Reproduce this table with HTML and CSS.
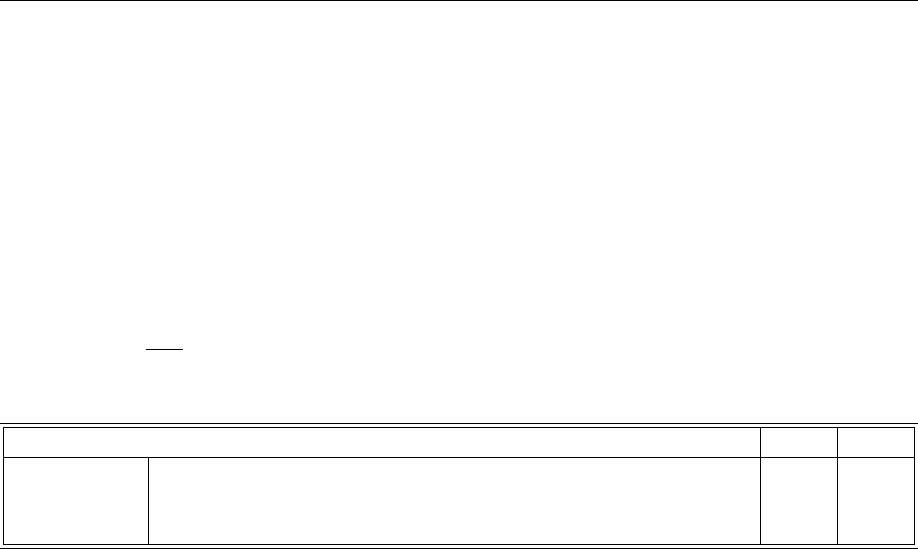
FILE: index.html
```html
<!DOCTYPE html>
<html>
<head>
<meta charset="utf-8">
<link rel="stylesheet" href="styles.css">
</head>
<body>
<div class="page">
  <div class="rule top"></div>
  <div class="linkrow"><span class="blank-link"></span></div>
  <div class="rule mid"></div>
  <table class="grid">
    <colgroup>
      <col class="c1"><col class="c2"><col class="c3"><col class="c4">
    </colgroup>
    <tr class="head">
      <td colspan="2"></td><td></td><td></td>
    </tr>
    <tr class="body">
      <td></td><td></td><td></td><td></td>
    </tr>
  </table>
  <div class="rule bottom"></div>
</div>
</body>
</html>
```
FILE: styles.css
```css
html, body {
  margin: 0;
  padding: 0;
  background: #fff;
  font-family: "Liberation Serif", serif;
}
.page {
  width: 918px;
}
.rule {
  height: 0;
  border-top: 1px solid #000;
}
.linkrow {
  margin-top: 348px;
  padding-left: 146px;
  height: 1px;
  display: flex;
}
.blank-link {
  display: block;
  width: 37px;
  height: 0;
  border-top: 1px solid #000;
}
.rule.mid {
  margin-top: 73px;
}
.grid {
  margin: 3px 0 0 3px;
  border-collapse: collapse;
  table-layout: fixed;
  width: 911px;
}
.grid td {
  border: 1px solid #000;
  padding: 0;
}
.c1 { width: 145px; }
.c2 { width: 612px; }
.c3 { width: 77px; }
.c4 { width: 77px; }
.head td { height: 29px; }
.body td { height: 86px; }
.rule.bottom {
  margin-top: 3px;
}
```
